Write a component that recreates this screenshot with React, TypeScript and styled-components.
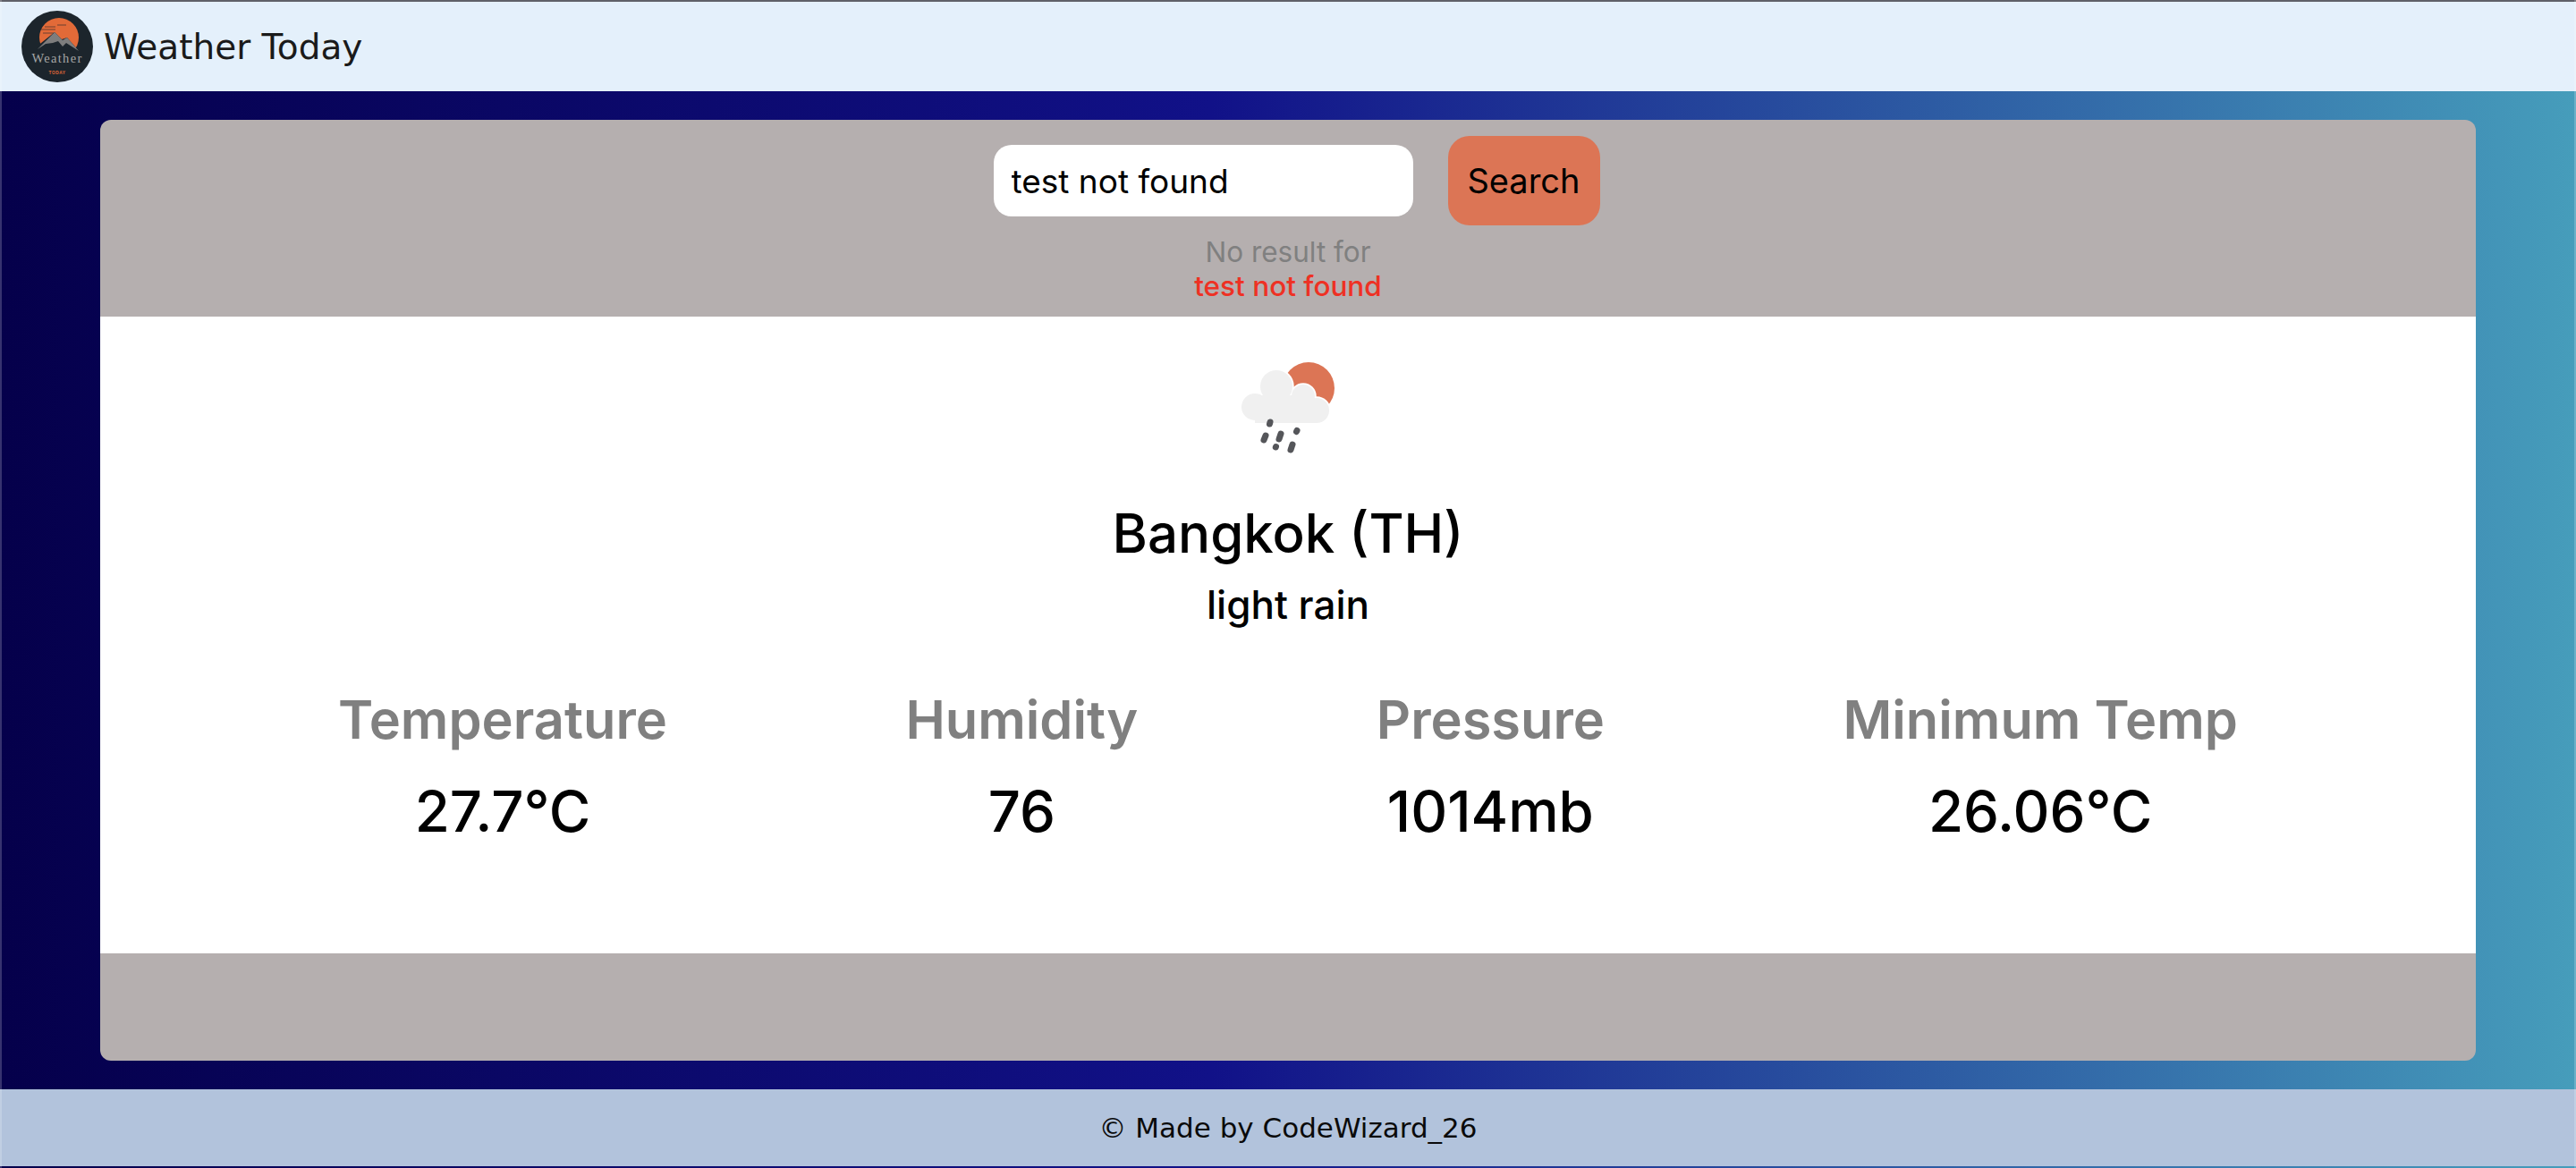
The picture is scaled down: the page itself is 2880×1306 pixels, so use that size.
import React from "react";
import styled, { createGlobalStyle } from "styled-components";

const GlobalStyle = createGlobalStyle`
  html, body { margin: 0; padding: 0; }
  body { font-family: Inter, "Noto Sans", sans-serif; }
  * { box-sizing: border-box; }
`;

const Page = styled.div`
  position: relative;
  height: 1306px;
  padding-bottom: 2px;
  display: flex;
  flex-direction: column;
  background: linear-gradient(90deg, #05004b 0%, #111188 47%, #469dbb 100%);
  &::after {
    content: "";
    position: absolute;
    inset: 0;
    border-left: 2px solid rgba(255, 255, 255, 0.2);
    border-right: 2px solid rgba(255, 255, 255, 0.2);
    pointer-events: none;
  }
`;

const Header = styled.header`
  height: 102px;
  flex: none;
  border-top: 2px solid #5f6068;
  background: #e4f0fb;
  padding-left: 24px;
  display: flex;
  align-items: center;
  gap: 12px;
`;

const Brand = styled.span`
  font-family: "DejaVu Sans", sans-serif;
  font-size: 39px;
  color: #1a1a1a;
`;

const Main = styled.main`
  flex: 1;
  padding: 32px 112px;
  display: flex;
`;

const Card = styled.div`
  flex: 1;
  border-radius: 12px;
  overflow: hidden;
  background: #b5afaf;
  display: flex;
  flex-direction: column;
`;

const SearchArea = styled.section`
  height: 220px;
  padding-top: 18px;
  display: flex;
  flex-direction: column;
  align-items: center;
`;

const SearchRow = styled.form`
  display: flex;
  align-items: center;
  gap: 39px;
  height: 100px;
  padding-left: 19px;
`;

const SearchInput = styled.input`
  width: 469px;
  height: 80px;
  border: none;
  outline: none;
  border-radius: 20px;
  padding: 0 20px;
  background: #fff;
  font-family: Inter, sans-serif;
  font-size: 37px;
  color: #000;
`;

const SearchButton = styled.button`
  width: 170px;
  height: 100px;
  border: none;
  border-radius: 24px;
  background: #dc7555;
  font-family: Inter, sans-serif;
  font-size: 38px;
  color: #000;
`;

const NoResult = styled.div<{ $found?: boolean }>`
  font-size: 31.5px;
  line-height: 38px;
  font-weight: ${(p) => (p.$found ? 500 : 400)};
  color: ${(p) => (p.$found ? "#ee3124" : "#808080")};
  &:first-of-type {
    margin-top: 11px;
  }
`;

const WeatherArea = styled.section`
  height: 712px;
  background: #fff;
  display: flex;
  flex-direction: column;
  align-items: center;
`;

const WeatherIcon = styled.svg`
  width: 170px;
  height: 140px;
  margin-top: 26px;
  flex: none;
`;

const City = styled.h2`
  margin: 38px 0 0;
  font-size: 60px;
  line-height: 76px;
  font-weight: 500;
  color: #000;
`;

const Description = styled.p`
  margin: 15px 0 0;
  font-size: 44px;
  line-height: 54px;
  font-weight: 500;
  color: #000;
`;

const Stats = styled.div`
  width: 90%;
  margin-top: 65px;
  display: flex;
  justify-content: space-around;
`;

const Stat = styled.div`
  display: flex;
  flex-direction: column;
  align-items: center;
`;

const StatLabel = styled.div`
  font-size: 59.5px;
  line-height: 72px;
  font-weight: 600;
  color: #808080;
`;

const StatValue = styled.div`
  margin-top: 28px;
  font-size: 63.5px;
  line-height: 78px;
  font-weight: 500;
  color: #000;
`;

const CardFoot = styled.div`
  flex: 1;
`;

const Footer = styled.footer`
  height: 86px;
  flex: none;
  background: #b2c3dc;
  display: flex;
  align-items: center;
  justify-content: center;
  font-family: "DejaVu Sans", sans-serif;
  font-size: 31px;
  color: #0a0a0a;
`;

function Logo() {
  return (
    <svg width="80" height="80" viewBox="0 0 80 80">
      <circle cx="40" cy="40" r="40" fill="#1c252c" />
      <circle cx="42" cy="30" r="22" fill="#e26a38" />
      <path d="M12 44L37 24l8 8 6-2 14 16v6H12z" fill="#1c252c" />
      <path d="M18 43L37 24l9 9 5-3 13 15-14-9-4 4-5-6-6 2-8 1z" fill="#7d7d7d" />
      <path d="M20 21h18M26 18h12M40 16h10M24 25h12" stroke="#1c252c" strokeWidth="0.6" />
      <text x="40" y="58" textAnchor="middle" fontFamily="Liberation Serif, serif" fontSize="14.500" letterSpacing="1.300" fill="#a5a5a5">
        Weather
      </text>
      <text x="40" y="71" textAnchor="middle" fontFamily="Liberation Sans, sans-serif" fontSize="4.800" fontWeight="700" letterSpacing="0.500" fill="#e26a38">
        TODAY
      </text>
    </svg>
  );
}

const cloudParts = (
  <>
    <circle cx="63" cy="75" r="15" />
    <circle cx="87" cy="52" r="18" />
    <circle cx="117" cy="63" r="13" />
    <circle cx="132" cy="79" r="14" />
    <rect x="63" y="62" width="54" height="31" />
    <rect x="117" y="76" width="15" height="17" />
  </>
);

function RainCloud() {
  return (
    <WeatherIcon viewBox="15 0 170 140">
      <circle cx="123" cy="54" r="29" fill="#dc7555" />
      <g fill="#fff" stroke="#fff" strokeWidth="3.500">
        {cloudParts}
      </g>
      <g fill="#f0f0f0">{cloudParts}</g>
      <g stroke="#55565a" strokeLinecap="round" fill="none" strokeWidth="7">
        <path d="M80 92l-.5 2" />
        <path d="M75 107l-2 5" />
        <path d="M92 105l-2 6" />
        <path d="M110 101.500l-.5 1" />
        <path d="M86.500 119.500l-.2 .5" />
        <path d="M105 117l-2 6" />
      </g>
    </WeatherIcon>
  );
}

const stats = [
  { label: "Temperature", value: "27.7°C" },
  { label: "Humidity", value: "76" },
  { label: "Pressure", value: "1014mb" },
  { label: "Minimum Temp", value: "26.06°C" },
];

export default function App() {
  return (
    <Page>
      <GlobalStyle />
      <Header>
        <Logo />
        <Brand>Weather Today</Brand>
      </Header>
      <Main>
        <Card>
          <SearchArea>
            <SearchRow onSubmit={(e) => e.preventDefault()}>
              <SearchInput defaultValue="test not found" />
              <SearchButton>Search</SearchButton>
            </SearchRow>
            <NoResult>No result for</NoResult>
            <NoResult $found>test not found</NoResult>
          </SearchArea>
          <WeatherArea>
            <RainCloud />
            <City>Bangkok (TH)</City>
            <Description>light rain</Description>
            <Stats>
              {stats.map((s) => (
                <Stat key={s.label}>
                  <StatLabel>{s.label}</StatLabel>
                  <StatValue>{s.value}</StatValue>
                </Stat>
              ))}
            </Stats>
          </WeatherArea>
          <CardFoot />
        </Card>
      </Main>
      <Footer>© Made by CodeWizard_26</Footer>
    </Page>
  );
}
